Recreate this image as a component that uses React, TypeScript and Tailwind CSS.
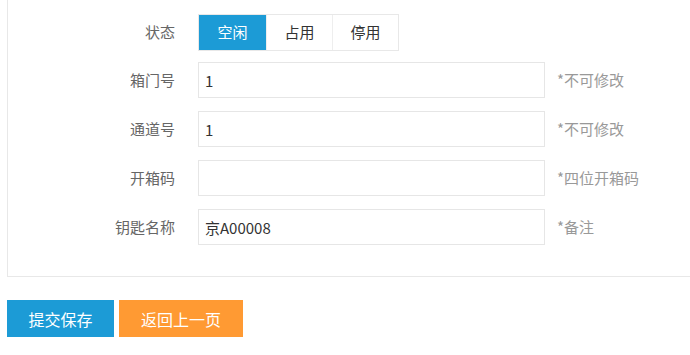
import React from "react";

const font = "font-['Noto_Sans_CJK_SC','Noto_Sans',sans-serif]";

interface FieldProps {
  label: string;
  value?: string;
  hint: string;
}

function Field({ label, value, hint }: FieldProps) {
  return (
    <div className="flex items-center h-[36px]">
      <div className="w-[167px] text-right text-[15px] text-[#666]">{label}</div>
      <input
        className="ml-[23px] w-[347px] h-[36px] border border-[#e6e6e6] px-[6px] text-[15px] text-[#333] outline-none bg-white"
        defaultValue={value}
        readOnly
      />
      <span className="ml-[12px] text-[15px] text-[#999]">{hint}</span>
    </div>
  );
}

export default function App() {
  const states = ["空闲", "占用", "停用"];
  return (
    <div className={`w-[690px] h-[355px] overflow-hidden bg-white ${font}`}>
      {/* Form panel */}
      <div className="ml-[7px] mr-[-10px] border-x border-b border-[#e8e8e8] pt-[14px] pb-[31px]">
        <div className="flex items-center h-[37px]">
          <div className="w-[167px] text-right text-[15px] text-[#666]">状态</div>
          <div className="ml-[23px] flex border border-[#e8e8e8] h-[37px]">
            {states.map((s, i) => (
              <div
                key={s}
                className={
                  i === 0
                    ? "w-[67px] flex items-center justify-center bg-[#1c9bd6] text-white text-[15px]"
                    : "w-[66px] flex items-center justify-center border-l border-[#eeeeee] text-[#333] text-[15px]"
                }
              >
                {s}
              </div>
            ))}
          </div>
        </div>
        <div className="mt-[11px] flex flex-col gap-[13px]">
          <Field label="箱门号" value="1" hint="*不可修改" />
          <Field label="通道号" value="1" hint="*不可修改" />
          <Field label="开箱码" hint="*四位开箱码" />
          <Field label="钥匙名称" value="京A00008" hint="*备注" />
        </div>
      </div>

      {/* Actions */}
      <div className="ml-[7px] mt-[23px] flex gap-[5px]">
        <button className="w-[107px] h-[37px] bg-[#1c9bd6] text-white text-[16px]">提交保存</button>
        <button className="w-[124px] h-[37px] bg-[#ff9a33] text-white text-[16px]">返回上一页</button>
      </div>
    </div>
  );
}
